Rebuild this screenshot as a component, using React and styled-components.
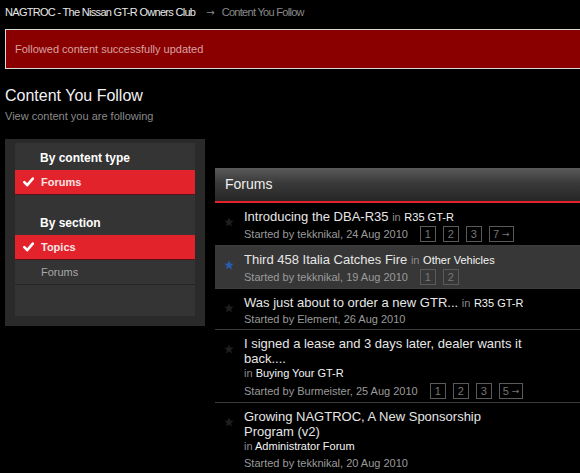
import { createGlobalStyle, styled } from "styled-components"

const GlobalStyle = createGlobalStyle`
    html, body {
        margin: 0;
        padding: 0;
        background-color: #000;
        overflow: hidden;
    }
    body {
        font-family: "Liberation Sans", Arial, sans-serif;
        color: #ddd;
    }
`

const filters = [
    {
        heading: "By content type",
        items: [{ label: "Forums", active: true }],
    },
    {
        heading: "By section",
        items: [
            { label: "Topics", active: true },
            { label: "Forums", active: false },
        ],
    },
]

const topics = [
    { title: "Introducing the DBA-R35", forum: "R35 GT-R", by: "tekknikal", date: "24 Aug 2010", pages: ["1", "2", "3", "7"] },
    { title: "Third 458 Italia Catches Fire", forum: "Other Vehicles", by: "tekknikal", date: "19 Aug 2010", pages: ["1", "2"], followed: true },
    { title: "Was just about to order a new GTR...", forum: "R35 GT-R", by: "Element", date: "26 Aug 2010", pages: [] },
    { title: "I signed a lease and 3 days later, dealer wants it back....", forum: "Buying Your GT-R", by: "Burmeister", date: "25 Aug 2010", pages: ["1", "2", "3", "5"], breakIn: true },
    { title: "Growing NAGTROC, A New Sponsorship Program (v2)", forum: "Administrator Forum", by: "tekknikal", date: "20 Aug 2010", pages: [], breakIn: true },
]

function Check() {
    return (
        <svg width="11" height="10" viewBox="0 0 11 10">
            <path d="M1.3 5.2 L4.2 8.2 L9.8 1.6" fill="none" stroke="#fff" strokeWidth="2.6" strokeLinecap="round" strokeLinejoin="round" />
        </svg>
    )
}

function Star({ on }) {
    return (
        <svg width="10" height="10" viewBox="0 0 10 10">
            <polygon points="5,0.3 6.3,3.6 9.7,3.8 7.1,6 8,9.5 5,7.6 2,9.5 2.9,6 0.3,3.8 3.7,3.6" fill={on ? "#2a5cae" : "#1e1e1e"} />
        </svg>
    )
}

function Topic({ data }) {
    const first = data.pages.length > 3 ? data.pages.slice(0, 3) : data.pages
    return (
        <TopicRow $followed={data.followed}>
            <StarCell><Star on={data.followed} /></StarCell>
            <TopicBody>
                <TopicTitle>
                    {data.title}
                    {!data.breakIn && <> <In>in</In> <ForumLink>{data.forum}</ForumLink></>}
                </TopicTitle>
                {data.breakIn && <InLine><In>in</In> <ForumLink>{data.forum}</ForumLink></InLine>}
                <Meta>
                    <span>Started by {data.by}, {data.date}</span>
                    {data.pages.length > 0 && (
                        <Pages>
                            {first.map(p => <PageBox key={p}>{p}</PageBox>)}
                            {data.pages.length > 3 && <PageBox $wide>{data.pages[3]}<Arrow>→</Arrow></PageBox>}
                        </Pages>
                    )}
                </Meta>
            </TopicBody>
        </TopicRow>
    )
}

export default function App() {
    return (
        <Page>
            <GlobalStyle />
            <Breadcrumb>
                NAGTROC - The Nissan GT-R Owners Club<Sep>→</Sep><Current>Content You Follow</Current>
            </Breadcrumb>
            <Message>Followed content successfully updated</Message>
            <Title>Content You Follow</Title>
            <Subtitle>View content you are following</Subtitle>
            <Columns>
                <Sidebar>
                    <SideInner>
                        {filters.map((group, i) => (
                            <div key={group.heading}>
                                <SideHeading $first={i === 0}>{group.heading}</SideHeading>
                                {group.items.map(item => (
                                    <SideItem key={item.label} $active={item.active}>
                                        <CheckCell>{item.active && <Check />}</CheckCell>
                                        {item.label}
                                    </SideItem>
                                ))}
                            </div>
                        ))}
                    </SideInner>
                </Sidebar>
                <MainPanel>
                    <PanelHeader>Forums</PanelHeader>
                    {topics.map(t => <Topic key={t.title} data={t} />)}
                </MainPanel>
            </Columns>
        </Page>
    )
}

const Page = styled.div`
    width: 800px;
    padding: 0 5px;
`
const Breadcrumb = styled.div`
    font-size: 11px;
    letter-spacing: -0.7px;
    line-height: 24px;
    height: 24px;
    color: #e8e8e8;
`
const Sep = styled.span`
    font-family: "DejaVu Sans", sans-serif;
    font-size: 10px;
    letter-spacing: 0;
    color: #8a8a8a;
    margin: 0 7px 0 11px;
`
const Current = styled.span`
    color: #8a8a8a;
`
const Message = styled.div`
    margin-top: 5px;
    height: 38px;
    line-height: 38px;
    padding: 0 9px;
    background-color: #8a0000;
    border: 1px solid #d8d8d8;
    font-size: 11px;
    color: #d8a2a2;
`
const Title = styled.h1`
    margin: 17px 0 0;
    font-size: 16px;
    font-weight: 400;
    line-height: 20px;
    color: #f2f2f2;
`
const Subtitle = styled.div`
    margin-top: 3px;
    font-size: 11px;
    line-height: 14px;
    color: #8a8a8a;
`
const Columns = styled.div`
    display: flex;
    gap: 10px;
    align-items: flex-start;
    margin-top: 16px;
`
const Sidebar = styled.aside`
    width: 180px;
    flex-shrink: 0;
    padding: 4px 10px 10px;
    background-color: #2a2a2a;
`
const SideInner = styled.div`
    background-color: #343434;
    padding-bottom: 31px;
`
const SideHeading = styled.div`
    padding: ${p => (p.$first ? "8px" : "21px")} 0 4px 25px;
    font-size: 12px;
    font-weight: 700;
    line-height: 15px;
    color: #fff;
`
const SideItem = styled.div`
    display: flex;
    align-items: center;
    height: 24px;
    font-size: 11px;
    font-weight: ${p => (p.$active ? 700 : 400)};
    color: ${p => (p.$active ? "#f6e4e4" : "#a8a8a8")};
    background-color: ${p => (p.$active ? "#e2232b" : "transparent")};
    border-bottom: 1px solid ${p => (p.$active ? "#5a1216" : "#242424")};
`
const CheckCell = styled.span`
    width: 25px;
    display: flex;
    justify-content: center;
    padding-left: 1px;
`
const MainPanel = styled.section`
    flex: 1;
    margin-top: 29px;
`
const PanelHeader = styled.div`
    height: 33px;
    line-height: 33px;
    padding-left: 10px;
    font-size: 14px;
    color: #eee;
    background: linear-gradient(#5a5a5a, #3a3a3a 45%, #262626);
    border-bottom: 2px solid #e2232b;
`
const TopicRow = styled.div`
    display: flex;
    padding: 6px 0 3px;
    background-color: ${p => (p.$followed ? "#373737" : "#000")};
    border-bottom: 1px solid #3c3c3c;
`
const StarCell = styled.div`
    width: 29px;
    display: flex;
    justify-content: center;
    padding-top: 8px;
    padding-right: 2px;
    box-sizing: border-box;
`
const TopicBody = styled.div`
    flex: 1;
`
const TopicTitle = styled.div`
    max-width: 285px;
    font-size: 13px;
    line-height: 15px;
    color: #e6e6e6;
`
const In = styled.span`
    font-size: 11px;
    line-height: 1;
    color: #8a8a8a;
`
const ForumLink = styled.span`
    font-size: 11px;
    line-height: 1;
    color: #f4f4f4;
`
const InLine = styled.div`
    font-size: 11px;
    line-height: 15px;
`
const Meta = styled.div`
    display: flex;
    align-items: center;
    margin-top: 2px;
    font-size: 11px;
    line-height: 14px;
    color: #9a9a9a;
`
const Pages = styled.div`
    display: flex;
    gap: 7px;
    margin-left: 12px;
`
const PageBox = styled.span`
    display: flex;
    align-items: center;
    justify-content: center;
    min-width: 12px;
    height: 14px;
    padding: 0 ${p => (p.$wide ? "3px" : "1px")};
    border: 1px solid #5a5a5a;
    color: #777;
    line-height: 14px;
`
const Arrow = styled.span`
    font-family: "DejaVu Sans", sans-serif;
    font-size: 9px;
    margin-left: 3px;
`
